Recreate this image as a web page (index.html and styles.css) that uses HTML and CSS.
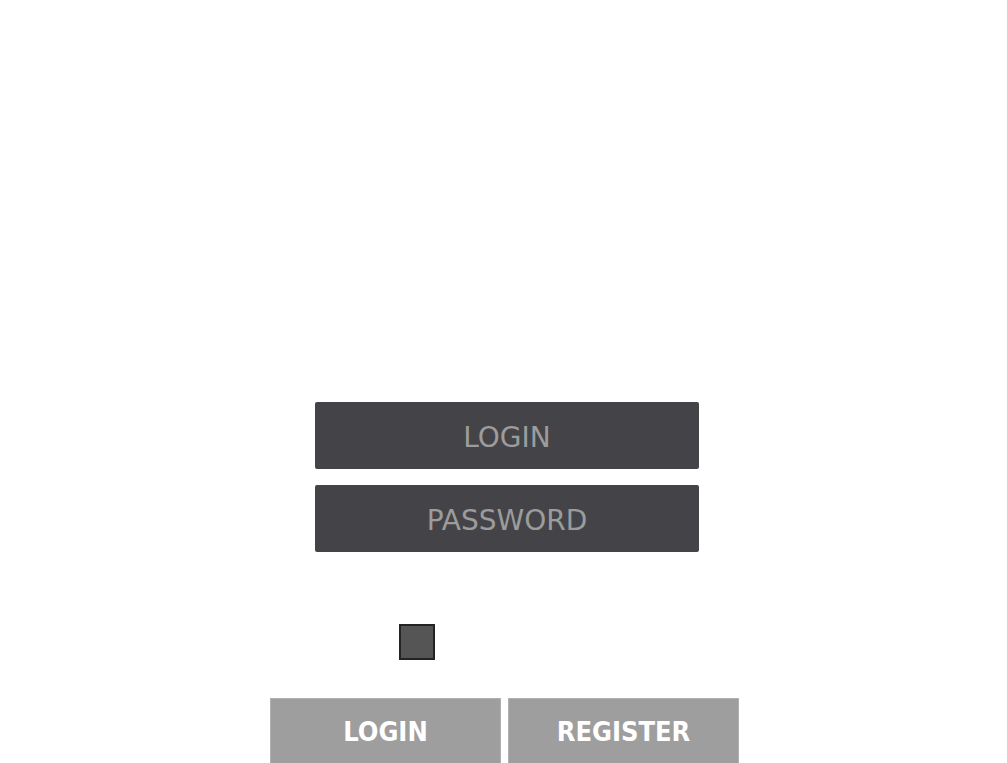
FILE: index.html
```html
<!DOCTYPE html>
<html>
<head>
<meta charset="utf-8">
<link rel="stylesheet" href="styles.css">
</head>
<body>
<div class="page">
  <form class="form">
    <div class="fields">
      <input class="field" type="text" placeholder="LOGIN">
      <input class="field" type="password" placeholder="PASSWORD">
    </div>
    <div class="remember">
      <span class="check"></span>
    </div>
    <div class="actions">
      <button type="button" class="btn">LOGIN</button>
      <button type="button" class="btn">REGISTER</button>
    </div>
  </form>
</div>
</body>
</html>
```
FILE: styles.css
```css
html, body {
  margin: 0;
  padding: 0;
  background: #ffffff;
}
.page {
  width: 1007px;
  height: 763px;
  overflow: hidden;
}
.form {
  display: flex;
  flex-direction: column;
  padding-top: 402px;
}
.fields {
  display: flex;
  flex-direction: column;
  gap: 16px;
  padding-left: 315px;
}
.field {
  box-sizing: border-box;
  width: 384px;
  height: 67px;
  border: none;
  border-radius: 2px;
  background: #444448;
  color: #9c9c9c;
  font-family: "DejaVu Sans", sans-serif;
  font-size: 28px;
  text-align: center;
  padding: 4px 0 0 0;
  outline: none;
}
.field::placeholder {
  color: #9c9c9c;
  opacity: 1;
}
.remember {
  display: flex;
  padding: 72px 0 0 399px;
}
.check {
  box-sizing: border-box;
  width: 36px;
  height: 36px;
  border: 2px solid #232323;
  background: #555555;
}
.actions {
  display: flex;
  gap: 7px;
  padding: 38px 0 0 270px;
}
.btn {
  box-sizing: border-box;
  width: 231px;
  height: 66px;
  border: 1px solid #b0b0b0;
  background: #9e9e9e;
  color: #ffffff;
  font-family: "DejaVu Sans Condensed", "DejaVu Sans", sans-serif;
  font-weight: bold;
  font-size: 27px;
  padding: 0;
  border-radius: 0;
}
```
